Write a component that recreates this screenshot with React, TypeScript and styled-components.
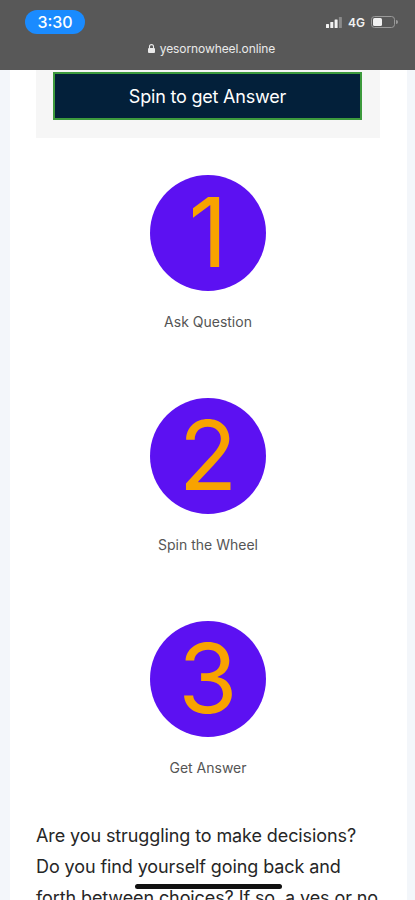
import React from "react";
import styled, { createGlobalStyle } from "styled-components";

const GlobalStyle = createGlobalStyle`
	html, body {
		margin: 0;
		padding: 0;
		background: #f3f6fa;
		overflow: hidden;
	}
	* { box-sizing: border-box; }
`;

const Screen = styled.div`
	position: relative;
	width: 415px;
	height: 900px;
	overflow: hidden;
	background: #f3f6fa;
	font-family: Inter, "Liberation Sans", sans-serif;
`;

const StatusBar = styled.div`
	height: 70px;
	background: #585858;
	display: flex;
	flex-direction: column;
	padding: 10px 17px 0 25px;
`;

const TopRow = styled.div`
	display: flex;
	justify-content: space-between;
	align-items: center;
	height: 24px;
`;

const TimePill = styled.div`
	width: 60px;
	height: 24px;
	border-radius: 12px;
	background: #1a8bff;
	color: #fff;
	font-size: 16px;
	font-weight: 500;
	display: flex;
	align-items: center;
	justify-content: center;
`;

const Indicators = styled.div`
	display: flex;
	align-items: center;
	gap: 6px;
	color: #f2f2f2;
	font-size: 12px;
	font-weight: 600;
`;

const UrlRow = styled.div`
	display: flex;
	justify-content: center;
	align-items: center;
	gap: 5px;
	margin-top: 7px;
	color: #eaeaea;
	font-size: 12px;
	letter-spacing: -0.1px;
`;

const Card = styled.main`
	width: 397px;
	margin-left: 10px;
	background: #fff;
	padding: 0 27px 0 26px;
`;

const SpinBox = styled.div`
	background: #f6f6f6;
	padding: 2px 18px 18px 17px;
`;

const SpinButton = styled.button`
	width: 100%;
	height: 48px;
	background: #03203a;
	border: 2px solid #3d9a3d;
	color: #fff;
	font-family: Inter, "Liberation Sans", sans-serif;
	font-size: 18px;
	letter-spacing: -0.2px;
	padding: 0;
`;

const Steps = styled.section`
	display: flex;
	flex-direction: column;
	align-items: center;
	gap: 66px;
	padding-top: 37px;
`;

const Step = styled.div`
	display: flex;
	flex-direction: column;
	align-items: center;
`;

const Circle = styled.div`
	width: 116px;
	height: 116px;
	border-radius: 50%;
	background: #5c11f2;
	color: #f8a300;
	display: flex;
	align-items: center;
	justify-content: center;
	font-size: 96px;
	font-weight: 400;
	line-height: 1;
	padding-bottom: 2px;
`;

const StepLabel = styled.div`
	margin-top: 21px;
	font-size: 14px;
	line-height: 20px;
	color: #555;
`;

const Intro = styled.p`
	margin: 42px 0 0;
	font-size: 18px;
	line-height: 31px;
	color: #262626;
	letter-spacing: -0.1px;
`;

const HomeBar = styled.div`
	position: absolute;
	left: 135px;
	bottom: 11px;
	width: 147px;
	height: 5px;
	border-radius: 3px;
	background: #111;
`;

const steps = [
	{ n: "1", label: "Ask Question" },
	{ n: "2", label: "Spin the Wheel" },
	{ n: "3", label: "Get Answer" },
];

const App: React.FC = () => {
	return (
		<Screen>
			<GlobalStyle />
			<StatusBar>
				<TopRow>
					<TimePill>3:30</TimePill>
					<Indicators>
						<svg width="16" height="11" viewBox="0 0 16 11">
							<rect x="0" y="7" width="3" height="4" rx="0.5" fill="#f2f2f2" />
							<rect x="4.3" y="5" width="3" height="6" rx="0.5" fill="#f2f2f2" />
							<rect x="8.6" y="2.5" width="3" height="8.5" rx="0.5" fill="#f2f2f2" />
							<rect x="12.9" y="0" width="3" height="11" rx="0.5" fill="#8a8a8a" />
						</svg>
						<span>4G</span>
						<svg width="27" height="12" viewBox="0 0 27 12">
							<rect x="0.5" y="0.5" width="23" height="11" rx="3" fill="none" stroke="#9a9a9a" />
							<rect x="2" y="2" width="9" height="8" rx="1.5" fill="#f2f2f2" />
							<path d="M25 4 v4 a1.5 1.5 0 0 0 0 -4z" fill="#9a9a9a" />
						</svg>
					</Indicators>
				</TopRow>
				<UrlRow>
					<svg width="7" height="9" viewBox="0 0 7 9">
						<path d="M1.5 4 V2.6 a2 2 0 0 1 4 0 V4" fill="none" stroke="#eaeaea" strokeWidth="1.1" />
						<rect x="0" y="4" width="7" height="5" rx="1" fill="#eaeaea" />
					</svg>
					<span>yesornowheel.online</span>
				</UrlRow>
			</StatusBar>
			<Card>
				<SpinBox>
					<SpinButton>Spin to get Answer</SpinButton>
				</SpinBox>
				<Steps>
					{steps.map((s) => (
						<Step key={s.n}>
							<Circle>{s.n}</Circle>
							<StepLabel>{s.label}</StepLabel>
						</Step>
					))}
				</Steps>
				<Intro>
					Are you struggling to make decisions? Do you find yourself going back and forth between choices? If so, a yes or no wheel can help you make up your mind.
				</Intro>
			</Card>
			<HomeBar />
		</Screen>
	);
};

export default App;
